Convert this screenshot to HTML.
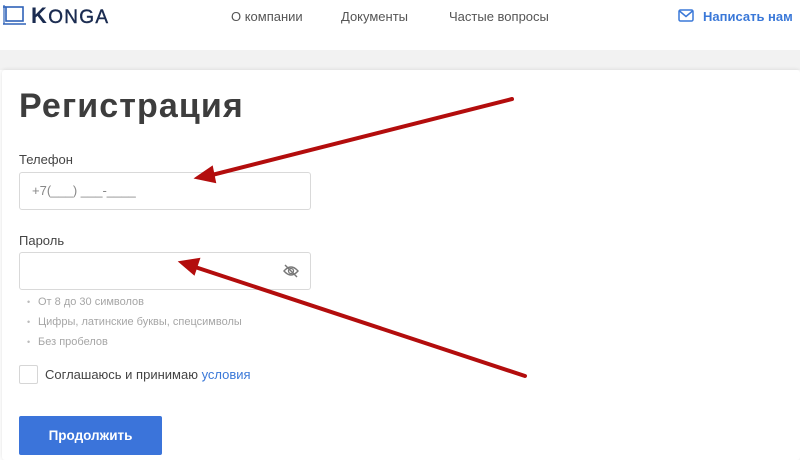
<!DOCTYPE html><html><head><meta charset="utf-8"><style>
*{margin:0;padding:0;box-sizing:border-box}
body{width:800px;height:460px;overflow:hidden;background:#fff;font-family:"Liberation Sans","DejaVu Sans",sans-serif;position:relative}
.a{position:absolute;white-space:nowrap}
.nav{font-size:13px;color:#555;top:9px}
.inp{position:absolute;left:19px;width:292px;height:38px;border:1px solid #d9d9d9;border-radius:3px;background:#fff}
.lbl{font-size:13px;color:#444}
.hint{font-size:11px;color:#a6a6a6;left:38px}
.hint:before{content:"•";position:absolute;left:-11px;color:#bbb;font-size:9px;top:1px}
</style></head><body>
<div class="a" style="left:0;top:50px;width:800px;height:20px;background:#f2f2f2"></div>
<div class="a" style="left:2px;top:70px;width:798px;height:390px;background:#fff;box-shadow:0 0 4px rgba(0,0,0,.12);border-radius:3px"></div>
<svg class="a" style="left:2px;top:5px" width="24" height="20" viewBox="0 0 24 20"><rect x="4" y="2" width="17" height="14" fill="none" stroke="#2e62b8" stroke-width="1.6"/><path d="M1 2H4M1 19H24" stroke="#2e62b8" stroke-width="1.4" fill="none"/><path d="M2 0V19" stroke="#2e62b8" stroke-width="1.2"/></svg>
<div class="a" style="left:31px;top:3px;font-size:22px;color:#1a2b50;letter-spacing:1.3px;font-weight:bold">K<span style="font-size:19px;font-weight:normal;-webkit-text-stroke:0.4px #1a2b50">ONGA</span></div>
<div class="a nav" style="left:231px">О компании</div>
<div class="a nav" style="left:341px">Документы</div>
<div class="a nav" style="left:449px">Частые вопросы</div>
<svg class="a" style="left:678px;top:9px" width="16" height="13" viewBox="0 0 16 13"><rect x="1" y="1" width="14" height="11" rx="1.5" fill="none" stroke="#3a78d8" stroke-width="1.5"/><path d="M1.5 2L8 7.5 14.5 2" fill="none" stroke="#3a78d8" stroke-width="1.5"/></svg>
<div class="a" style="left:703px;top:9px;font-size:13px;color:#3a78d8;font-weight:bold">Написать нам</div>
<div class="a" style="left:19px;top:87px;font-size:34px;font-weight:bold;color:#3d3d3d;letter-spacing:1.1px">Регистрация</div>
<div class="a lbl" style="left:19px;top:152px">Телефон</div>
<div class="inp" style="top:172px"></div>
<div class="a" style="left:32px;top:183px;font-size:13px;color:#888">+7(___) ___-____</div>
<div class="a lbl" style="left:19px;top:233px">Пароль</div>
<div class="inp" style="top:252px"></div>
<svg class="a" style="left:283px;top:264px" width="16" height="14" viewBox="0 0 16 14"><path d="M1 7Q8 -1 15 7Q8 15 1 7Z" fill="none" stroke="#777" stroke-width="1.4"/><circle cx="8" cy="7" r="2.5" fill="none" stroke="#777" stroke-width="1.3"/><path d="M2 1L14 13" stroke="#777" stroke-width="1.4"/></svg>
<div class="a hint" style="top:296px">От 8 до 30 символов</div>
<div class="a hint" style="top:316px">Цифры, латинские буквы, спецсимволы</div>
<div class="a hint" style="top:336px">Без пробелов</div>
<div class="a" style="left:19px;top:365px;width:19px;height:19px;border:1px solid #d6d6d6;border-radius:2px"></div>
<div class="a" style="left:45px;top:367px;font-size:13px;color:#444">Соглашаюсь и принимаю <span style="color:#3a78d8">условия</span></div>
<div class="a" style="left:19px;top:416px;width:143px;height:39px;background:#3b74da;border-radius:2px;color:#fff;font-size:13.5px;font-weight:bold;text-align:center;line-height:39px">Продолжить</div>
<svg class="a" style="left:0;top:0" width="800" height="460"><g stroke="#b30d0d" stroke-width="4" fill="#b30d0d" stroke-linecap="round"><path d="M512 99L208 176" fill="none"/><path d="M196 178L212 167L215 182Z" stroke-width="2"/><path d="M525 376L192 266" fill="none"/><path d="M180 262L199 259L194 274Z" stroke-width="2"/></g></svg>
</body></html>
